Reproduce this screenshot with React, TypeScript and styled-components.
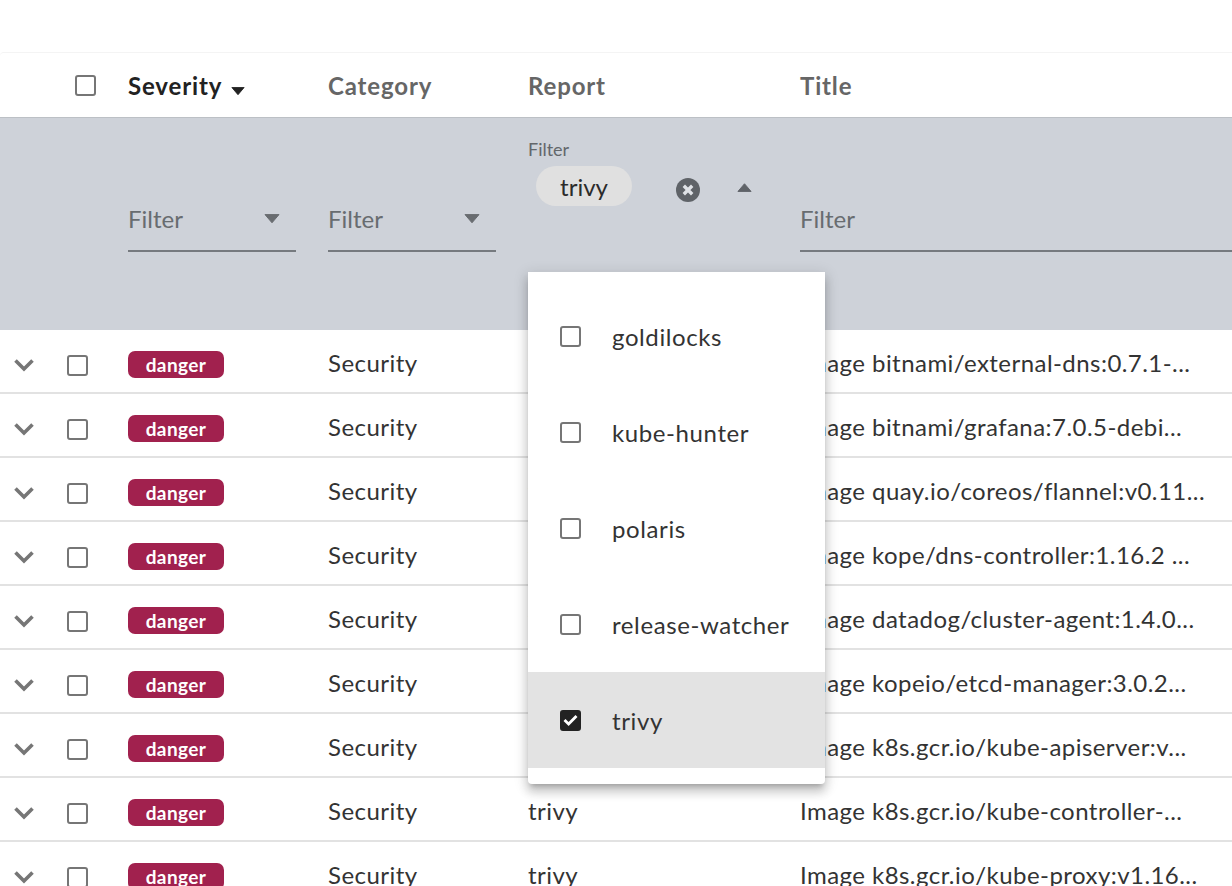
import React from 'react';
import styled, { createGlobalStyle } from 'styled-components';

const GlobalStyle = createGlobalStyle`
	html, body {
		margin: 0;
		height: 100%;
		overflow: hidden;
		background: #fff;
	}
	body {
		font-family: 'Lato', 'Noto Sans', sans-serif;
		color: #2b2b2b;
	}
`;

const COLUMNS = '64px 64px 200px 200px 272px 1fr';

const Page = styled.div`
	position: relative;
	width: 1232px;
	height: 886px;
	padding-top: 52px;
	box-sizing: border-box;
	overflow: hidden;
`;

const Table = styled.div`
	border-top: 1px solid #f4f4f4;
	border-radius: 4px 0 0 0;
`;

const HeaderRow = styled.div`
	display: grid;
	grid-template-columns: ${COLUMNS};
	height: 64px;
	align-items: center;
	border-bottom: 1px solid #bcc0c5;
`;

const HeaderCell = styled.div<{ $active?: boolean }>`
	display: flex;
	align-items: center;
	gap: 9px;
	font-size: 24px;
	font-weight: 700;
	letter-spacing: 0.85px;
	color: ${({ $active }) => ($active ? '#222' : '#666')};
`;

const SortCaret = styled.span`
	display: flex;
	margin-top: 12px;
`;

const CheckCell = styled.div`
	display: flex;
	justify-content: center;
	padding-right: 22px;
`;

const RowCheckCell = styled.div`
	display: flex;
	justify-content: center;
	padding-right: 38px;
	margin-top: 8px;
`;

const ExpandCell = styled.div`
	display: flex;
	justify-content: center;
	padding-right: 16px;
	margin-top: 7px;
	color: #767676;
`;

const FilterRow = styled.div`
	display: grid;
	grid-template-columns: ${COLUMNS};
	height: 212px;
	background: #ced2d9;
`;

const FilterCell = styled.div`
	display: flex;
	flex-direction: column;
	padding-top: 83px;
	box-sizing: border-box;
`;

const FilterInput = styled.div<{ $wide?: boolean }>`
	display: flex;
	align-items: center;
	justify-content: space-between;
	height: 51px;
	width: ${({ $wide }) => ($wide ? '100%' : '168px')};
	border-bottom: 2px solid #767a7f;
	box-sizing: border-box;
	padding: 0 16px 15px 0;
	font-size: 24px;
	color: #686c70;
`;

const FilterCaret = styled.span`
	display: flex;
	margin-top: 2px;
`;

const OpenFilter = styled.div`
	display: flex;
	flex-direction: column;
	padding-top: 21px;
	width: 232px;
`;

const FloatLabel = styled.div`
	font-size: 18px;
	line-height: 20px;
	color: #63676b;
`;

const ChipRow = styled.div`
	display: flex;
	align-items: center;
	margin-top: 7px;
	padding-left: 8px;
`;

const Chip = styled.div`
	display: flex;
	align-items: center;
	justify-content: center;
	width: 96px;
	height: 40px;
	border-radius: 20px;
	background: #e0e0e0;
	font-size: 24px;
	color: #2b2b2b;
`;

const ClearIcon = styled.span`
	display: flex;
	margin: 8px 0 0 44px;
`;

const UpIcon = styled.span`
	display: flex;
	margin: 2px 0 0 37px;
`;

const BodyRow = styled.div`
	display: grid;
	grid-template-columns: ${COLUMNS};
	height: 64px;
	box-sizing: border-box;
	align-items: center;
	border-bottom: 2px solid #e2e2e2;
	font-size: 24px;
	letter-spacing: 0.45px;
	color: #333;
	white-space: nowrap;

	&:first-of-type {
		height: 65px;
		padding-bottom: 1px;
	}
`;

const TextCell = styled.div`
	padding-top: 2px;
`;

const BadgeCell = styled.div`
	display: flex;
	margin-top: 6px;
`;

const Badge = styled.span`
	display: inline-flex;
	align-items: center;
	justify-content: center;
	width: 96px;
	height: 27px;
	border-radius: 7px;
	background: #a1214e;
	color: #fff;
	font-size: 19px;
	font-weight: 700;
	letter-spacing: 0.4px;
`;

const Box = styled.span<{ $checked?: boolean }>`
	display: flex;
	align-items: center;
	justify-content: center;
	width: 21px;
	height: 21px;
	box-sizing: border-box;
	border-radius: 3px;
	border: 2px solid ${({ $checked }) => ($checked ? '#222' : '#767676')};
	background: ${({ $checked }) => ($checked ? '#222' : 'transparent')};
`;

const Menu = styled.div`
	position: absolute;
	left: 528px;
	top: 272px;
	width: 297px;
	padding: 16px 0;
	background: #fff;
	border-radius: 0 0 4px 4px;
	box-shadow: 0 5px 5px -3px rgba(0, 0, 0, 0.2), 0 8px 10px 1px rgba(0, 0, 0, 0.14),
		0 3px 14px 2px rgba(0, 0, 0, 0.12);
`;

const MenuItem = styled.div<{ $selected?: boolean }>`
	display: flex;
	align-items: center;
	gap: 31px;
	height: 96px;
	padding-left: 32px;
	font-size: 24px;
	letter-spacing: 0.6px;
	color: #333;
	background: ${({ $selected }) => ($selected ? '#e3e3e3' : 'transparent')};
`;

const Caret = ({ up, color, width = 16 }: { up?: boolean; color: string; width?: number }) => (
	<svg width={width} height={width * 0.6} viewBox="0 0 16 9.6" aria-hidden="true">
		<path
			d={up ? 'M8 0.8 L15 9 H1 Z' : 'M1 0.6 H15 L8 8.8 Z'}
			fill={color}
			stroke={color}
			strokeLinejoin="round"
		/>
	</svg>
);

const Chevron = () => (
	<svg width="22" height="14" viewBox="0 0 22 14" aria-hidden="true">
		<path d="M2.5 2.5 L11 11 L19.5 2.5" fill="none" stroke="currentColor" strokeWidth="3.6" />
	</svg>
);

const ClearGlyph = () => (
	<svg width="24" height="24" viewBox="0 0 24 24" aria-hidden="true">
		<circle cx="12" cy="12" r="12" fill="#5f6368" />
		<path d="M7.8 7.8 L16.2 16.2 M16.2 7.8 L7.8 16.2" stroke="#dfe2e6" strokeWidth="3.4" />
	</svg>
);

const CheckMark = () => (
	<svg width="15" height="12" viewBox="0 0 15 12" aria-hidden="true">
		<path d="M1.5 6 L5.6 10 L13.5 2" fill="none" stroke="#fff" strokeWidth="2.8" />
	</svg>
);

const titles = [
	'Image bitnami/external-dns:0.7.1-...',
	'Image bitnami/grafana:7.0.5-debi...',
	'Image quay.io/coreos/flannel:v0.11...',
	'Image kope/dns-controller:1.16.2 ...',
	'Image datadog/cluster-agent:1.4.0...',
	'Image kopeio/etcd-manager:3.0.2...',
	'Image k8s.gcr.io/kube-apiserver:v...',
	'Image k8s.gcr.io/kube-controller-...',
	'Image k8s.gcr.io/kube-proxy:v1.16...',
];

const reports = ['goldilocks', 'kube-hunter', 'polaris', 'release-watcher', 'trivy'];

export default function App() {
	return (
		<Page>
			<GlobalStyle />
			<Table>
				<HeaderRow>
					<div />
					<CheckCell>
						<Box />
					</CheckCell>
					<HeaderCell $active>
						Severity
						<SortCaret>
							<Caret color="#222" width={14} />
						</SortCaret>
					</HeaderCell>
					<HeaderCell>Category</HeaderCell>
					<HeaderCell>Report</HeaderCell>
					<HeaderCell>Title</HeaderCell>
				</HeaderRow>
				<FilterRow>
					<div />
					<div />
					<FilterCell>
						<FilterInput>
							Filter
							<FilterCaret>
								<Caret color="#686c70" />
							</FilterCaret>
						</FilterInput>
					</FilterCell>
					<FilterCell>
						<FilterInput>
							Filter
							<FilterCaret>
								<Caret color="#686c70" />
							</FilterCaret>
						</FilterInput>
					</FilterCell>
					<OpenFilter>
						<FloatLabel>Filter</FloatLabel>
						<ChipRow>
							<Chip>trivy</Chip>
							<ClearIcon>
								<ClearGlyph />
							</ClearIcon>
							<UpIcon>
								<Caret up color="#5f6368" width={15} />
							</UpIcon>
						</ChipRow>
					</OpenFilter>
					<FilterCell>
						<FilterInput $wide>Filter</FilterInput>
					</FilterCell>
				</FilterRow>
				{titles.map((title) => (
					<BodyRow key={title}>
						<ExpandCell>
							<Chevron />
						</ExpandCell>
						<RowCheckCell>
							<Box />
						</RowCheckCell>
						<BadgeCell>
							<Badge>danger</Badge>
						</BadgeCell>
						<TextCell>Security</TextCell>
						<TextCell>trivy</TextCell>
						<TextCell>{title}</TextCell>
					</BodyRow>
				))}
			</Table>
			<Menu>
				{reports.map((report) => (
					<MenuItem key={report} $selected={report === 'trivy'}>
						<Box $checked={report === 'trivy'}>{report === 'trivy' ? <CheckMark /> : null}</Box>
						{report}
					</MenuItem>
				))}
			</Menu>
		</Page>
	);
}
